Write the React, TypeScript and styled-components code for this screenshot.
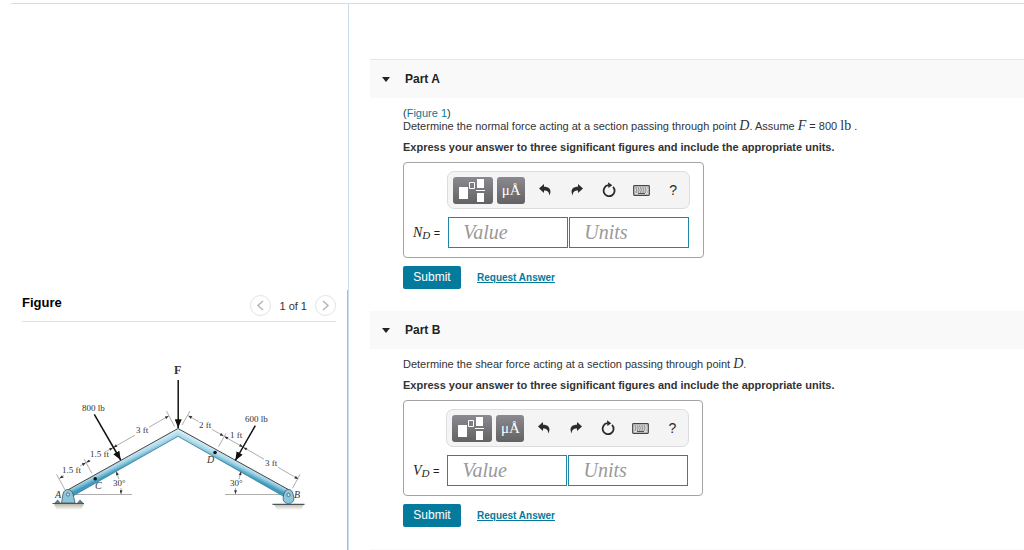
import React from "react";
import styled, { createGlobalStyle } from "styled-components";

const TEAL = "#047a9c";
const SANS = '"Liberation Sans", Arial, sans-serif';
const SERIF = '"Liberation Serif", "Times New Roman", serif';

const GlobalStyle = createGlobalStyle`
  *, *::before, *::after { box-sizing: border-box; }
  body { margin: 0; background: #fff; color: #333; font: 11px/13px ${SANS}; }
  h2, p { margin: 0; }
  button, input { font: inherit; }
`;

const Page = styled.div`
  min-height: 100vh;
  padding: 3px 0 0 11px;
  display: flex;
  flex-direction: column;
`;

const Columns = styled.div`
  flex: 1;
  display: grid;
  grid-template-columns: 338px minmax(0, 1fr);
  border-top: 1px solid #dcdcdc;
  @media (max-width: 640px) { grid-template-columns: 1fr; }
`;

const Sidebar = styled.aside`
  display: flex;
  flex-direction: column;
  padding-top: 286px;
  border-right: 1px solid #c9dceb;
`;

const FigurePanel = styled.section`
  flex: 1;
  padding: 0 11px;
  border-right: 1px solid #a9bfd0;
`;

const FigureHeader = styled.header`
  display: flex;
  align-items: center;
  justify-content: space-between;
  height: 32px;
  border-bottom: 1px solid #e3e3e3;
`;

const FigureTitle = styled.h2`
  font-size: 13px;
  line-height: 16px;
  color: #000;
  padding-bottom: 6px;
`;

const Pager = styled.nav`
  display: flex;
  align-items: center;
  gap: 8px;
  padding-bottom: 1px;
`;

const PagerButton = styled.button`
  display: grid;
  place-items: center;
  width: 21px;
  height: 21px;
  padding: 0;
  border: 1px solid #e2e2e2;
  border-radius: 50%;
  background: #fff;
`;

const PagerCount = styled.span`
  padding-top: 3px;
`;

const Diagram = styled.svg`
  display: block;
  margin: 38px 0 0 28px;
  font-family: ${SERIF};
`;

const Main = styled.main`
  display: flex;
  flex-direction: column;
  padding: 55px 0 0 21px;
`;

const PartHeader = styled.header<{ $ruled?: boolean }>`
  display: flex;
  align-items: center;
  gap: 14px;
  padding: 13px 11px 12px;
  background: #f9f9f9;
  border-top: ${(p) => (p.$ruled ? "1px solid #e6e6e6" : "none")};
`;

const Toggle = styled.button`
  display: grid;
  place-items: center;
  width: 10px;
  height: 13px;
  padding: 0;
  border: 0;
  background: none;
`;

const PartTitle = styled.h2`
  font-size: 12px;
  line-height: 13px;
  color: #222;
`;

const PartBody = styled.div`
  padding: 9px 12px 22px 33px;
`;

const Prompt = styled.p`
  margin-bottom: 8px;
`;

const Instruction = styled.p`
  font-weight: bold;
  margin-bottom: 8px;
`;

const FigureLink = styled.a`
  color: ${TEAL};
  text-decoration: none;
`;

const MathText = styled.span<{ $italic?: boolean }>`
  font-family: ${SERIF};
  font-size: 14px;
  line-height: 1px;
  font-style: ${(p) => (p.$italic ? "italic" : "normal")};
`;

const AnswerBox = styled.div`
  display: grid;
  grid-template-columns: auto 243px;
  column-gap: 7px;
  row-gap: 8px;
  width: fit-content;
  padding: 8px 13px 9px 9px;
  border: 1px solid #a3a3a3;
  border-radius: 4px;
`;

const Toolbar = styled.div`
  grid-column: 2;
  display: flex;
  align-items: center;
  gap: 12px;
  height: 38px;
  padding: 0 5px;
  border: 1px solid #dcdcdc;
  border-radius: 7px;
  background: #f4f4f4;
`;

const DarkTools = styled.div`
  display: flex;
  gap: 4px;
  margin-right: -2px;
`;

const DarkButton = styled.button<{ $wide?: boolean }>`
  display: grid;
  place-items: center;
  width: ${(p) => (p.$wide ? "40px" : "28px")};
  height: 27px;
  padding: 0;
  border: 0;
  border-radius: 3px;
  color: #fff;
  background: linear-gradient(#8b8a90, #626264);
  font: 15px/20px ${SERIF};
`;

const ToolButton = styled.button`
  display: grid;
  place-items: center;
  width: 20px;
  height: 24px;
  padding: 0;
  border: 0;
  background: none;
  color: #2b2b2b;
  font-size: 14px;
`;

const AnswerLabel = styled.label`
  align-self: center;
  font: italic 14px/18px ${SERIF};
  color: #222;
  white-space: nowrap;
`;

const Subscript = styled.span`
  position: relative;
  top: 2px;
  font-size: 11px;
`;

const Equals = styled.span`
  font: 11px/13px ${SANS};
`;

const Fields = styled.div`
  display: grid;
  grid-template-columns: 1fr 1fr;
  gap: 1px;
  padding: 0 1px;
`;

const AnswerInput = styled.input`
  min-width: 0;
  width: 100%;
  height: 31px;
  padding: 0 14px;
  border: 1px solid #1f86a4;
  border-radius: 0;
  background: #fff;
  font: 20px/28px ${SERIF};
  &::placeholder { color: #999; font-style: italic; opacity: 1; }
`;

const Actions = styled.div`
  display: flex;
  align-items: center;
  gap: 16px;
  margin-top: 8px;
`;

const SubmitButton = styled.button`
  width: 58px;
  height: 23px;
  padding: 0;
  border: 0;
  border-radius: 2px;
  background: ${TEAL};
  color: #fff;
  font-size: 12px;
`;

const RequestLink = styled.a`
  color: ${TEAL};
  font-size: 10px;
  font-weight: bold;
`;

const EndStrip = styled.div`
  flex: 1;
  background: #f9f9f9;
`;

function TemplateIcon() {
  return (
    <svg width="32" height="23" viewBox="0 0 32 23" aria-hidden="true">
      <path fill="#fff" d="M2 8h9v12H2zM20 0h7v9h-7zM20 14h7v9h-7zM19 11h9v1h-9z" />
      <path fill="none" stroke="#fff" d="M12.500 3.500h5v6h-5z" />
    </svg>
  );
}

function ArrowIcon({ flip }: { flip?: boolean }) {
  return (
    <svg width="12" height="12" viewBox="0 0 12 12" aria-hidden="true">
      <path
        fill="currentColor"
        transform={flip ? "translate(12 0) scale(-1 1)" : undefined}
        d="M0 4.500 5 0v2.800c4.500 0 6.800 2.200 6.400 5.400-.1 1.300-.5 2.300-1.200 3.300.1-3.200-1.400-4.800-5.200-4.900V9z"
      />
    </svg>
  );
}

function ResetIcon() {
  return (
    <svg width="14" height="16" viewBox="0 0 14 16" aria-hidden="true">
      <path fill="none" stroke="currentColor" strokeWidth="1.800" d="M11 4.800A5.500 5.500 0 1 1 6.600 3.200" />
      <path fill="currentColor" d="M6 .3 10.300 3.200 6.400 6z" />
    </svg>
  );
}

function KeyboardIcon() {
  return (
    <svg width="17" height="11" viewBox="0 0 17 11" aria-hidden="true">
      <rect x=".7" y=".7" width="15.600" height="9.600" rx=".8" fill="#ddd" stroke="#444" strokeWidth="1.200" />
      <path stroke="#555" strokeDasharray="1.300 1" d="M2.500 3h12M3 5h11.500M2.500 7h12" />
      <path stroke="#555" d="M5 8.500h7" />
    </svg>
  );
}

function Chevron({ right }: { right?: boolean }) {
  return (
    <svg width="9" height="13" viewBox="0 0 9 13" aria-hidden="true">
      <path fill="none" stroke="#b5b5b5" strokeWidth="1.500" d={right ? "M2 2l5 4.500-5 4.500" : "M7 2 2 6.500l5 4.500"} />
    </svg>
  );
}

function FrameDiagram() {
  return (
    <Diagram width="260" height="155" viewBox="50 360 260 155" role="img" aria-label="Two-member frame with supports A and B">
      <defs>
        <linearGradient id="beamLeft" gradientUnits="userSpaceOnUse" x1="120" y1="459" x2="124" y2="467">
          <stop offset="0" stopColor="#d3edf6" />
          <stop offset="0.500" stopColor="#a5d5e7" />
          <stop offset="1" stopColor="#3f9abd" />
        </linearGradient>
        <linearGradient id="beamRight" gradientUnits="userSpaceOnUse" x1="237" y1="460" x2="233" y2="468">
          <stop offset="0" stopColor="#d3edf6" />
          <stop offset="0.500" stopColor="#a5d5e7" />
          <stop offset="1" stopColor="#3f9abd" />
        </linearGradient>
        <linearGradient id="ground" x1="0" y1="0" x2="0" y2="1">
          <stop offset="0" stopColor="#bdb6a4" />
          <stop offset="1" stopColor="#fff" />
        </linearGradient>
        <marker id="load" viewBox="0 0 10 8" refX="10" refY="4" markerWidth="9" markerHeight="7" markerUnits="userSpaceOnUse" orient="auto">
          <path d="M0 0 10 4 0 8z" fill="#111" />
        </marker>
        <marker id="dim" viewBox="0 0 5 4" refX="5" refY="2" markerWidth="5" markerHeight="3" markerUnits="userSpaceOnUse" orient="auto-start-reverse">
          <path d="M0 0 5 2 0 4z" fill="#333" />
        </marker>
      </defs>

      <path fill="url(#ground)" d="M54 504h30l-3 6H57zM274 504h30l-3 6h-24z" />
      <path stroke="#777" strokeWidth=".6" d="M66 494.500h66M225 494.500h62" />

      <path fill="url(#beamLeft)" d="M65 491.500 178 428.300v8L72 496.500z" />
      <path fill="url(#beamRight)" d="M178 428.300 291 491 284 496.500 178 436.300z" />
      <path fill="none" stroke="#444" d="M65 491.500 178 428.500 291 491" />
      <path fill="none" stroke="#357f9d" strokeWidth=".8" d="M72 496.500 178 436.300 284 496.500" />

      <path fill="#8cc6dd" stroke="#41545d" strokeWidth=".8" d="M61.500 503 63 494c1-6 8.500-6 10 0l2 9z" />
      <path fill="#5b7f8d" d="M54.500 503l3-3.500 3.500 3.500zM77 503l3-3.500 3.500 3.500z" />
      <path stroke="#48575e" strokeWidth="1.200" d="M52.500 503.500H84M272.500 504.300h32" />
      <circle cx="68" cy="494.500" r="1.600" fill="#d6edf5" stroke="#444" strokeWidth=".7" />
      <path fill="#8cc6dd" stroke="#41545d" strokeWidth=".8" d="M288.500 489.500c4 0 4.500 4 5.300 8 .7 3.500-2 6-5.300 6s-6-2.500-5.300-6c.8-4 1.300-8 5.300-8z" />
      <circle cx="288.500" cy="495" r="1.600" fill="#d6edf5" stroke="#444" strokeWidth=".7" />
      <circle cx="95.200" cy="478.700" r="1.800" fill="#111" />
      <circle cx="215" cy="452.500" r="1.800" fill="#111" />

      <g stroke="#777" strokeWidth=".6">
        <path d="M56.500 474.300l8.500 15.500M84 459l8 14.500M166.500 411l8 15.500M190 411l-8 14M226 433.300l-7.500 13.500M300 474.300l-7.500 14" />
        <path markerStart="url(#dim)" d="M59.500 478.300 64 475.700" />
        <path markerEnd="url(#dim)" d="M80 466 85.800 462.800" />
        <path markerStart="url(#dim)" d="M86.200 462.600 90.500 460.200" />
        <path markerEnd="url(#dim)" d="M107 451 113 447.700" />
        <path markerStart="url(#dim)" d="M113.400 447.400 135 435.200" />
        <path markerEnd="url(#dim)" d="M149 427.200 168.700 415.900" />
        <path markerStart="url(#dim)" d="M188.300 415.700 198.500 421.600" />
        <path markerEnd="url(#dim)" d="M212 429.400 223.600 436" />
        <path markerStart="url(#dim)" d="M224.400 436.500 234 442" />
        <path markerEnd="url(#dim)" d="M234 442 243 447" />
        <path markerStart="url(#dim)" d="M243.400 447.400 264 459.200" />
        <path markerEnd="url(#dim)" d="M278 467.300 298.300 479" />
        <path markerEnd="url(#dim)" d="M121 488v6" />
        <path markerEnd="url(#dim)" d="M118.800 479 116.300 471.500" />
        <path markerEnd="url(#dim)" d="M235.500 488v6" />
        <path markerEnd="url(#dim)" d="M239 479 241 471.500" />
      </g>

      <g stroke="#111" strokeWidth="1.500">
        <path markerEnd="url(#load)" d="M178.200 380v48" />
        <path markerEnd="url(#load)" d="M94.300 414.300 120.700 460" />
        <path markerEnd="url(#load)" d="M255.300 425.700 235.300 460.500" />
      </g>

      <g fontSize="9" fill="#333">
        <text x="174" y="374" fontSize="12" fontWeight="bold">F</text>
        <text x="82" y="411">800 lb</text>
        <text x="245" y="422">600 lb</text>
        <text x="62" y="473">1.5 ft</text>
        <text x="90" y="457">1.5 ft</text>
        <text x="136" y="433">3 ft</text>
        <text x="199" y="428">2 ft</text>
        <text x="230" y="438">1 ft</text>
        <text x="265" y="466">3 ft</text>
        <text x="113" y="486">30°</text>
        <text x="230" y="486">30°</text>
        <g fontStyle="italic" fontSize="10">
          <text x="55" y="498">A</text>
          <text x="95" y="489">C</text>
          <text x="207" y="463">D</text>
          <text x="294" y="498">B</text>
        </g>
      </g>
    </Diagram>
  );
}

interface PartProps {
  letter: string;
  symbol: string;
  ruled?: boolean;
  children: React.ReactNode;
}

function Part({ letter, symbol, ruled, children }: PartProps) {
  const valueId = `value-${letter}`;
  return (
    <section>
      <PartHeader $ruled={ruled}>
        <Toggle aria-label={`Collapse Part ${letter}`}>
          <svg width="10" height="5" viewBox="0 0 10 5" aria-hidden="true">
            <path fill="#222" d="M1 0h8L5 5z" />
          </svg>
        </Toggle>
        <PartTitle>Part {letter}</PartTitle>
      </PartHeader>
      <PartBody>
        <Prompt>{children}</Prompt>
        <Instruction>
          Express your answer to three significant figures and include the appropriate units.
        </Instruction>
        <AnswerBox>
          <Toolbar role="toolbar" aria-label="Answer tools">
            <DarkTools>
              <DarkButton $wide aria-label="Templates"><TemplateIcon /></DarkButton>
              <DarkButton aria-label="Symbols">μÅ</DarkButton>
            </DarkTools>
            <ToolButton aria-label="Undo"><ArrowIcon /></ToolButton>
            <ToolButton aria-label="Redo"><ArrowIcon flip /></ToolButton>
            <ToolButton aria-label="Reset"><ResetIcon /></ToolButton>
            <ToolButton aria-label="Keyboard shortcuts"><KeyboardIcon /></ToolButton>
            <ToolButton aria-label="Help">?</ToolButton>
          </Toolbar>
          <AnswerLabel htmlFor={valueId}>
            {symbol}<Subscript>D</Subscript> <Equals>=</Equals>
          </AnswerLabel>
          <Fields>
            <AnswerInput id={valueId} placeholder="Value" />
            <AnswerInput aria-label="Units" placeholder="Units" />
          </Fields>
        </AnswerBox>
        <Actions>
          <SubmitButton>Submit</SubmitButton>
          <RequestLink href="#request">Request Answer</RequestLink>
        </Actions>
      </PartBody>
    </section>
  );
}

export default function App() {
  return (
    <>
      <GlobalStyle />
      <Page>
        <Columns>
          <Sidebar>
            <FigurePanel>
              <FigureHeader>
                <FigureTitle>Figure</FigureTitle>
                <Pager aria-label="Figures">
                  <PagerButton aria-label="Previous figure"><Chevron /></PagerButton>
                  <PagerCount>1 of 1</PagerCount>
                  <PagerButton aria-label="Next figure"><Chevron right /></PagerButton>
                </Pager>
              </FigureHeader>
              <FrameDiagram />
            </FigurePanel>
          </Sidebar>
          <Main>
            <Part letter="A" symbol="N" ruled>
              (<FigureLink href="#figure">Figure 1</FigureLink>)<br />
              Determine the normal force acting at a section passing through point{" "}
              <MathText $italic>D</MathText>. Assume <MathText $italic>F</MathText> = 800{" "}
              <MathText>lb</MathText> .
            </Part>
            <Part letter="B" symbol="V">
              Determine the shear force acting at a section passing through point{" "}
              <MathText $italic>D</MathText>.
            </Part>
            <EndStrip />
          </Main>
        </Columns>
      </Page>
    </>
  );
}
